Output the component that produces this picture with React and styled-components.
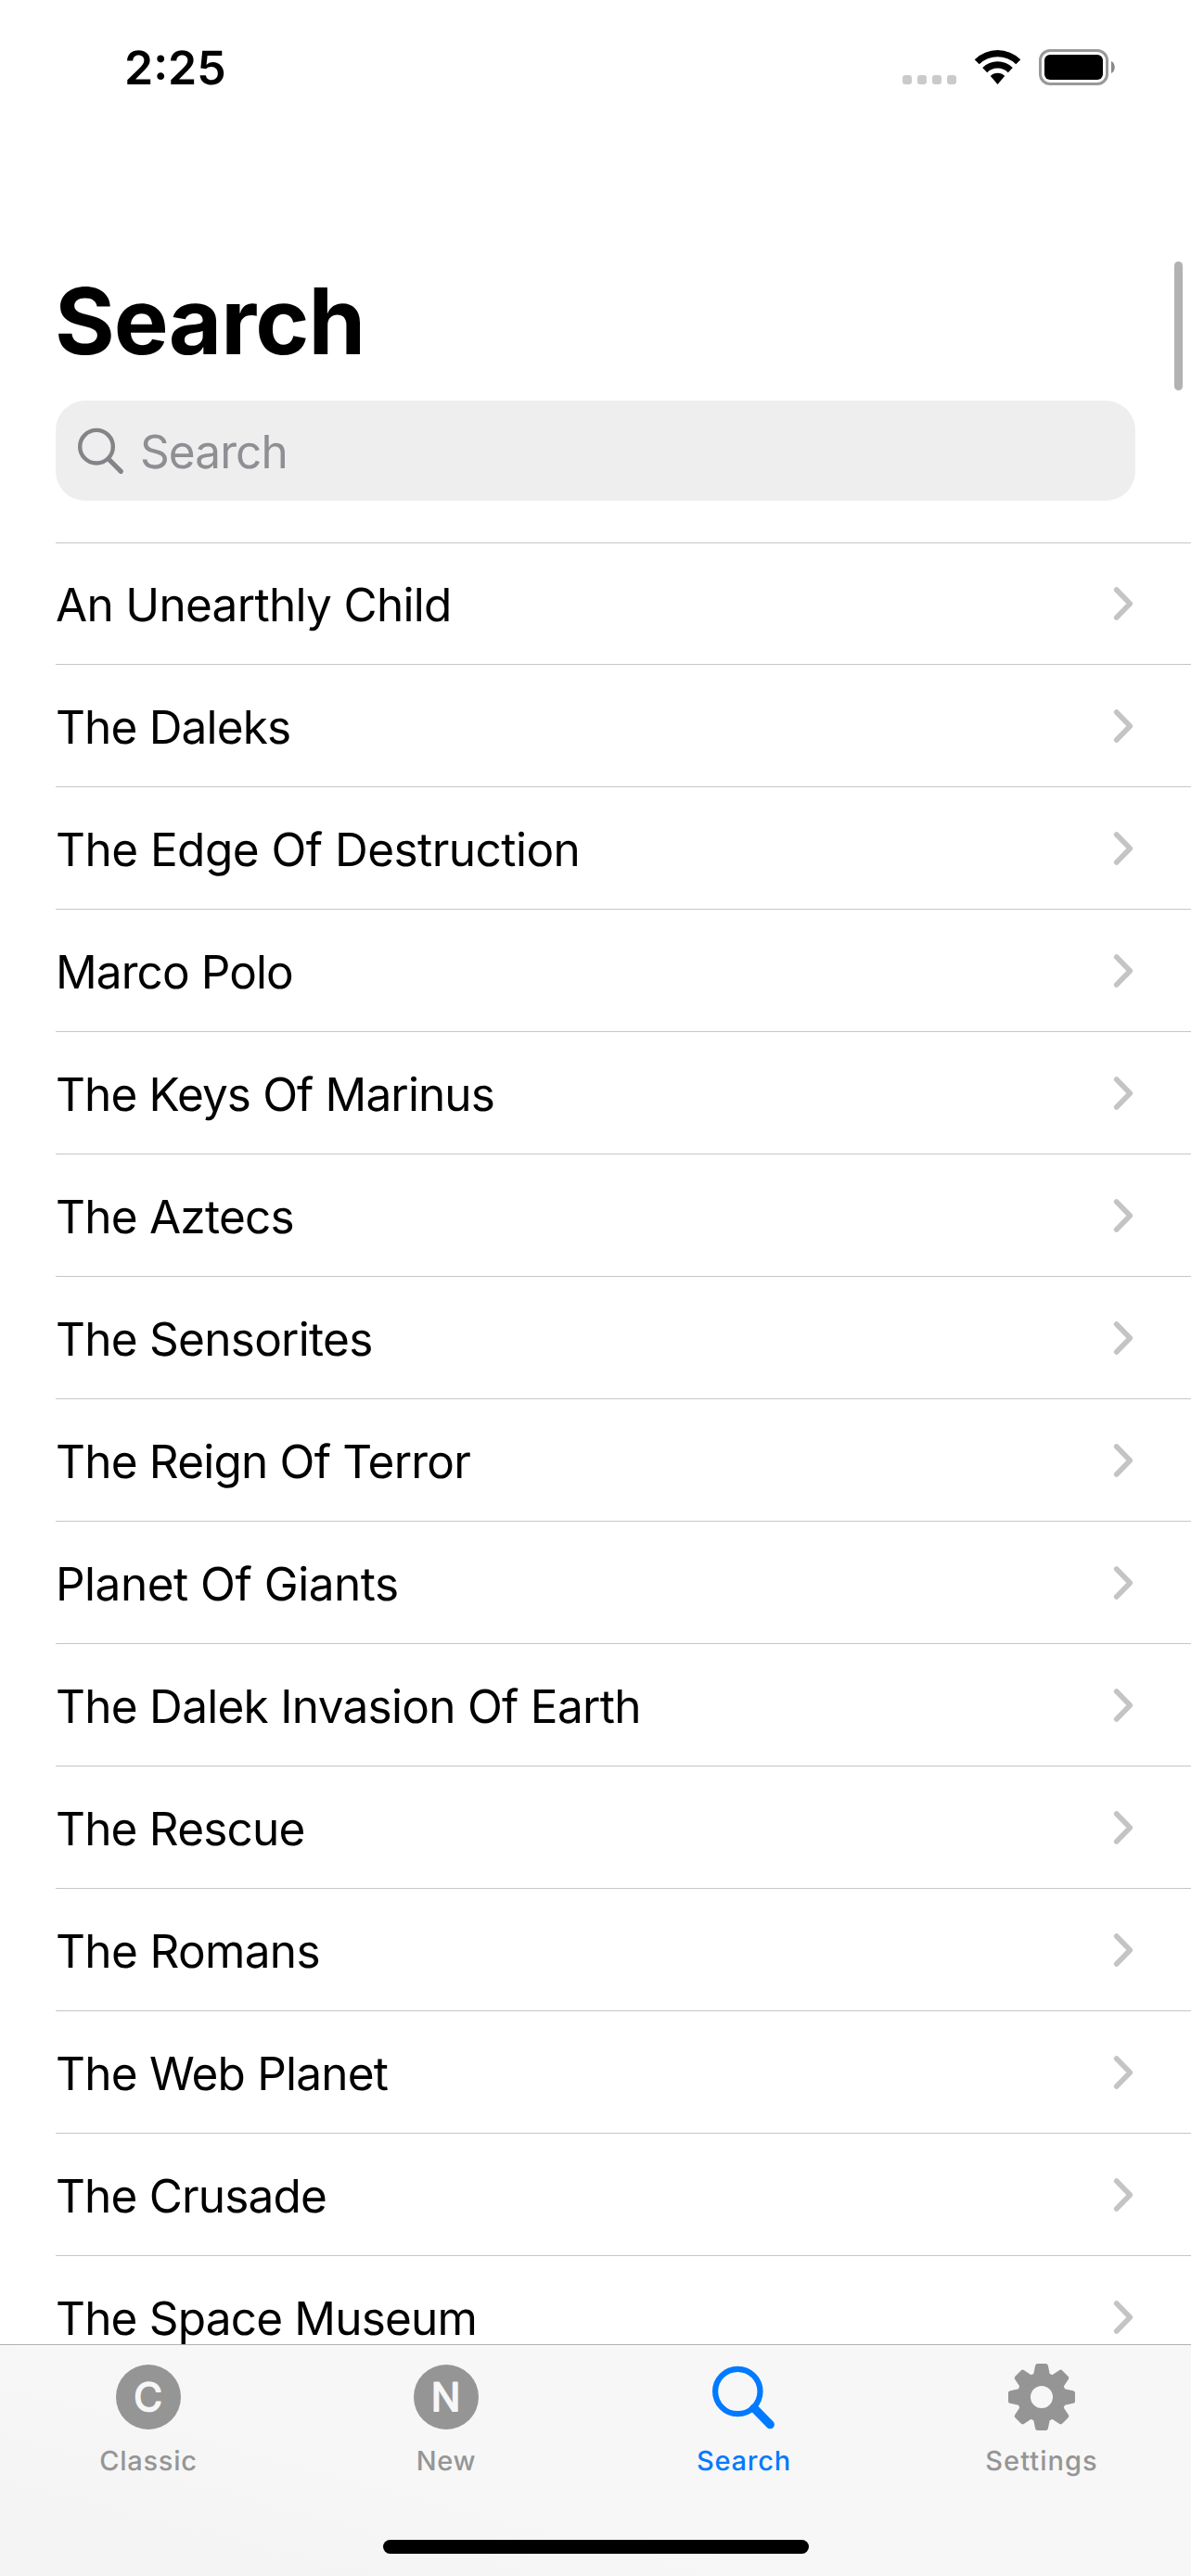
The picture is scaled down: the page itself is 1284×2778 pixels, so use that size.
import React from "react";
import styled, { createGlobalStyle } from "styled-components";

const GlobalStyle = createGlobalStyle`
  *, *::before, *::after { box-sizing: border-box; }
  body {
    margin: 0;
    background: #fff;
    color: #000;
    font-family: Inter, "Liberation Sans", sans-serif;
    text-rendering: geometricPrecision;
    -webkit-font-smoothing: antialiased;
  }
`;

const Screen = styled.div`
  position: relative;
  display: flex;
  flex-direction: column;
  width: 1284px;
  height: 2778px;
  overflow: hidden;
  background: #fff;
`;

const StatusBar = styled.header`
  display: flex;
  justify-content: space-between;
  align-items: flex-start;
  height: 141px;
  padding: 53px 82px 0 134px;
`;

const Time = styled.span`
  padding-top: 1px;
  font-size: 50px;
  font-weight: 600;
  line-height: 40px;
`;

const StatusIcons = styled.div`
  display: flex;
  align-items: flex-start;
`;

const SignalDots = styled.div`
  display: flex;
  gap: 6px;
  margin: 28px 19px 0 0;
`;

const Dot = styled.i`
  width: 10px;
  height: 10px;
  border-radius: 3px;
  background: #cacaca;
`;

const WifiSvg = styled.svg`
  width: 51px;
  height: 39px;
  margin-right: 19px;
`;

const BatterySvg = styled.svg`
  width: 82px;
  height: 39px;
`;

const Header = styled.div`
  padding: 154px 60px 45px;
`;

const Title = styled.h1`
  margin: 0 0 34px -1px;
  font-size: 99px;
  font-weight: 700;
  line-height: 103px;
  letter-spacing: -1px;
`;

const SearchField = styled.div`
  display: flex;
  align-items: center;
  gap: 17px;
  height: 108px;
  padding-left: 22px;
  border-radius: 32px;
  background: #eeeeef;
  color: #8e8e93;
`;

const FieldGlass = styled.svg`
  width: 52px;
  height: 52px;
  flex: none;
`;

const Placeholder = styled.span`
  padding-top: 2px;
  font-size: 49.5px;
  line-height: 60px;
  letter-spacing: -0.9px;
`;

const List = styled.ul`
  flex: 1;
  min-height: 0;
  margin: 0 0 0 60px;
  padding: 0;
  overflow: hidden;
  list-style: none;
  border-top: 1px solid #c6c6c8;
`;

const Row = styled.li`
  display: flex;
  align-items: center;
  justify-content: space-between;
  height: ${(p) => (p.$first ? 131 : 132)}px;
  padding-right: 61px;
  border-bottom: 1px solid #c6c6c8;
`;

const RowTitle = styled.span`
  padding-top: 2px;
  font-size: 49.5px;
  line-height: 60px;
  white-space: nowrap;
  letter-spacing: ${(p) => p.$tracking}px;
`;

const ChevronSvg = styled.svg`
  width: 24px;
  height: 40px;
  flex: none;
`;

const ScrollThumb = styled.div`
  position: absolute;
  top: 282px;
  right: 9px;
  width: 9px;
  height: 139px;
  border-radius: 5px;
  background: #b2b2b2;
`;

const TabBar = styled.footer`
  display: flex;
  flex-direction: column;
  align-items: center;
  justify-content: space-between;
  height: 250px;
  flex: none;
  padding-bottom: 24px;
  border-top: 1px solid #b2b2b2;
  background: linear-gradient(15deg, #f3f3f3, #f7f7f7 45%);
`;

const Tabs = styled.nav`
  display: grid;
  grid-template-columns: repeat(4, 1fr);
  width: 100%;
`;

const Tab = styled.div`
  display: flex;
  flex-direction: column;
  align-items: center;
  padding-top: 16px;
  color: ${(p) => (p.$active ? "#007aff" : "#959595")};
`;

const TabSvg = styled.svg`
  width: 80px;
  height: 80px;
  margin-right: 1px;
`;

const SymbolText = styled.text`
  font-family: Inter, "Liberation Sans", sans-serif;
  font-size: 42px;
  font-weight: 400;
  fill: #f7f7f7;
  stroke: #f7f7f7;
  stroke-width: 1.8px;
  stroke-linejoin: round;
  text-anchor: middle;
`;

const TabLabel = styled.span`
  margin: 11px 1px 0 0;
  font-size: 29px;
  font-weight: 500;
  line-height: 36px;
  letter-spacing: ${(p) => p.$tracking}px;
`;

const HomeIndicator = styled.div`
  width: 459px;
  height: 15px;
  border-radius: 8px;
  background: #000;
`;

const stories = [
  ["An Unearthly Child", -0.69],
  ["The Daleks", -0.84],
  ["The Edge Of Destruction", -0.53],
  ["Marco Polo", -0.91],
  ["The Keys Of Marinus", -0.88],
  ["The Aztecs", -0.76],
  ["The Sensorites", -0.73],
  ["The Reign Of Terror", -0.79],
  ["Planet Of Giants", -0.5],
  ["The Dalek Invasion Of Earth", -0.72],
  ["The Rescue", -0.8],
  ["The Romans", -0.64],
  ["The Web Planet", -0.77],
  ["The Crusade", -0.83],
  ["The Space Museum", -0.81],
];

const Wifi = () => (
  <WifiSvg viewBox="0 0 51 39">
    <path d="M0.7 11.2 A35.5 35.5 0 0 1 50.3 11.2 L45.3 16.3 A28.3 28.3 0 0 0 5.7 16.3 Z" />
    <path d="M9.2 20 A23.3 23.3 0 0 1 41.8 20 L36.8 25.2 A16.2 16.2 0 0 0 14.2 25.2 Z" />
    <path d="M17.8 29 A11 11 0 0 1 33.2 29 L25.5 38 Z" />
  </WifiSvg>
);

const Battery = () => (
  <BatterySvg viewBox="0 0 82 39">
    <rect x="1.5" y="1.5" width="72" height="36" rx="10.5" fill="none" stroke="#999" strokeWidth="3" />
    <rect x="6" y="6" width="63" height="27" rx="6" />
    <path d="M78 13 C83 15 83 24 78 26 Z" fill="#8a8a8a" />
  </BatterySvg>
);

const Chevron = () => (
  <ChevronSvg viewBox="0 0 24 40">
    <path
      d="M4.7 5 L19.3 20 L4.7 35"
      fill="none"
      stroke="#c4c4c6"
      strokeWidth="5.6"
      strokeLinecap="round"
      strokeLinejoin="round"
    />
  </ChevronSvg>
);

const Letter = ({ children }) => (
  <TabSvg viewBox="0 0 80 80">
    <circle cx="40" cy="40" r="35" fill="currentColor" />
    <SymbolText x="39.7" y="55.3">{children}</SymbolText>
  </TabSvg>
);

const Glass = () => (
  <TabSvg viewBox="0 0 80 80" fill="none" stroke="currentColor" strokeLinecap="round">
    <circle cx="33.3" cy="34" r="24.2" strokeWidth="6.2" />
    <path d="M51 52 L68.3 69.7" strokeWidth="9.2" />
  </TabSvg>
);

const Gear = () => (
  <TabSvg viewBox="0 0 80 80" fill="currentColor">
    <circle cx="40" cy="40" r="19.2" fill="none" stroke="currentColor" strokeWidth="14.4" />
    {[0, 45, 90, 135, 180, 225, 270, 315].map((a) => (
      <path
        key={a}
        transform={`translate(40 40) rotate(${a})`}
        d="M-4.4 -33.5 L4.4 -33.5 L6.8 -22 L-6.8 -22 Z"
        stroke="currentColor"
        strokeWidth="5"
        strokeLinejoin="round"
      />
    ))}
  </TabSvg>
);

export default function App() {
  return (
    <Screen>
      <GlobalStyle />
      <StatusBar>
        <Time>2:25</Time>
        <StatusIcons>
          <SignalDots>
            <Dot />
            <Dot />
            <Dot />
            <Dot />
          </SignalDots>
          <Wifi />
          <Battery />
        </StatusIcons>
      </StatusBar>
      <Header>
        <Title>Search</Title>
        <SearchField>
          <FieldGlass viewBox="0 0 52 52" fill="none" stroke="#848488" strokeLinecap="round">
            <circle cx="22" cy="21.7" r="17.8" strokeWidth="4.4" />
            <path d="M35.5 35.5 L48.3 48.3" strokeWidth="5.2" />
          </FieldGlass>
          <Placeholder>Search</Placeholder>
        </SearchField>
      </Header>
      <List>
        {stories.map(([name, tracking], i) => (
          <Row key={name} $first={i === 0}>
            <RowTitle $tracking={tracking}>{name}</RowTitle>
            <Chevron />
          </Row>
        ))}
      </List>
      <TabBar>
        <Tabs>
          <Tab>
            <Letter>C</Letter>
            <TabLabel $tracking={0.75}>Classic</TabLabel>
          </Tab>
          <Tab>
            <Letter>N</Letter>
            <TabLabel $tracking={0.6}>New</TabLabel>
          </Tab>
          <Tab $active>
            <Glass />
            <TabLabel $tracking={0.75}>Search</TabLabel>
          </Tab>
          <Tab>
            <Gear />
            <TabLabel $tracking={1.05}>Settings</TabLabel>
          </Tab>
        </Tabs>
        <HomeIndicator />
      </TabBar>
      <ScrollThumb />
    </Screen>
  );
}
